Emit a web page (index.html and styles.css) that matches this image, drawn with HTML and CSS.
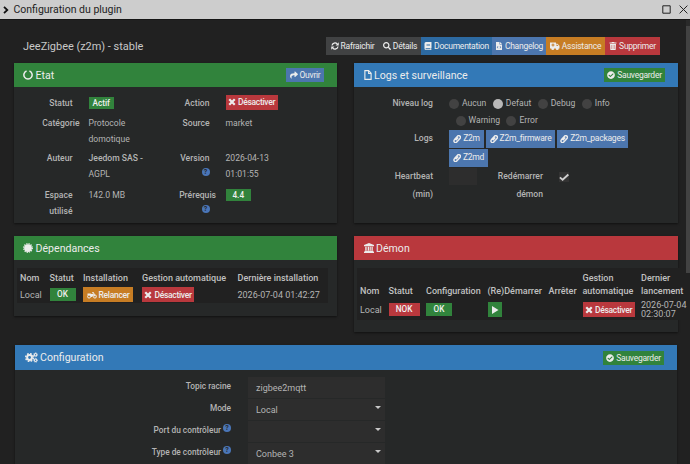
FILE: index.html
```
<!DOCTYPE html>
<html lang="fr">
<head>
    <meta charset="UTF-8">
    <meta name="viewport" content="width=device-width, initial-scale=1.0">
    <title>Configuration du plugin</title>
    <link rel="stylesheet" href="styles.css">
</head>
<body>
    <svg class="sprite" aria-hidden="true">
        <symbol id="i-check" viewBox="0 0 512 512"><path d="M504 256c0 136.967-111.033 248-248 248S8 392.967 8 256 119.033 8 256 8s248 111.033 248 248zM227.314 387.314l184-184c6.248-6.248 6.248-16.379 0-22.627l-22.627-22.627c-6.248-6.249-16.379-6.249-22.628 0L216 308.118l-70.059-70.059c-6.248-6.248-16.379-6.248-22.628 0l-22.627 22.627c-6.248 6.248-6.248 16.379 0 22.627l104 104c6.249 6.249 16.379 6.249 22.628.001z"/></symbol>
        <symbol id="i-search" viewBox="0 0 512 512"><path d="M505 442.7L405.3 343c-4.5-4.5-10.6-7-17-7H372c27.6-35.3 44-79.7 44-128C416 93.1 322.9 0 208 0S0 93.1 0 208s93.1 208 208 208c48.3 0 92.7-16.4 128-44v16.3c0 6.4 2.5 12.5 7 17l99.7 99.7c9.4 9.4 24.6 9.4 33.9 0l28.3-28.3c9.4-9.4 9.4-24.6.1-34zM208 336c-70.7 0-128-57.2-128-128 0-70.7 57.2-128 128-128 70.7 0 128 57.2 128 128 0 70.7-57.2 128-128 128z"/></symbol>
        <symbol id="i-share" viewBox="0 0 512 512"><path d="M503.691 189.836L327.687 37.851C312.281 24.546 288 35.347 288 56.015v80.053C127.371 137.907 0 170.1 0 322.326c0 61.441 39.581 122.309 83.333 154.132 13.653 9.931 33.111-2.533 28.077-18.631C66.066 312.814 132.917 274.316 288 272.085V360c0 20.7 24.3 31.453 39.687 18.164l176.004-152c11.071-9.562 11.086-26.753 0-36.328z"/></symbol>
        <symbol id="i-sync" viewBox="0 0 16 16"><path d="M2 7a6 6 0 0 1 10.5-3M14 9a6 6 0 0 1-10.5 3" fill="none" stroke="currentColor" stroke-width="2.4"/><path d="M15.5.5v6.3H9.2zM.5 15.5V9.2h6.3z"/></symbol>
        <symbol id="i-book" viewBox="0 0 16 16"><path fill-rule="evenodd" d="M4 0h11v12l-.6.6v2.2H15V16H4a3 3 0 0 1-3-3V3a3 3 0 0 1 3-3zm1 4v1.2h7V4zm0 2.4v1.2h7V6.4zM4 12.3a1 1 0 0 0 0 2h8.8v-2z"/></symbol>
        <symbol id="i-file-code" viewBox="0 0 16 16"><path fill-rule="evenodd" d="M2 0h7v5h5v11H2zM10 0l4 4h-4zM6 8l-2.5 2.5L6 13l.8-.8-1.7-1.7 1.7-1.7zm4 0-.8.8 1.7 1.7-1.7 1.7.8.8 2.5-2.5z"/></symbol>
        <symbol id="i-ambulance" viewBox="0 0 20 16"><path fill-rule="evenodd" d="M0 1h12v2.5h3l4 4V13h-1.5a3 3 0 0 1-6 0h-3a3 3 0 0 1-6 0H0zm5 2v2H3v2h2v2h2V7h2V5H7V3zm8 2v3h4l-3-3z"/><circle cx="5.5" cy="13" r="1.4"/><circle cx="14.5" cy="13" r="1.4"/></symbol>
        <symbol id="i-trash" viewBox="0 0 16 16"><path d="M1 1h4l1-1h4l1 1h4v2H1z"/><path fill-rule="evenodd" d="M2 4h12l-.7 12H2.7zM5 6v8h.7V6zm2.7 0v8h.7V6zM10.3 6v8h.7V6z"/></symbol>
        <symbol id="i-times" viewBox="0 0 16 16"><path d="M2.5 2.5l11 11m0-11l-11 11" fill="none" stroke="currentColor" stroke-width="4.4"/></symbol>
        <symbol id="i-ring" viewBox="0 0 16 16"><path d="M10.3 1.7a6.6 6.6 0 1 1-4.6 0" fill="none" stroke="currentColor" stroke-width="2.4"/></symbol>
        <symbol id="i-file" viewBox="0 0 12 16"><path d="M1 1h6l4 4v10H1zM7 1v4.5h4" fill="none" stroke="currentColor" stroke-width="1.8"/></symbol>
        <symbol id="i-clip" viewBox="0 0 16 16"><path d="M5.5 10.5l5-5.5M3.5 8.5l5.5-6a3.3 3.3 0 0 1 5 4.5L7.5 14a3 3 0 0 1-5-4z" fill="none" stroke="currentColor" stroke-width="2.9"/></symbol>
        <symbol id="i-badge" viewBox="0 0 16 16"><circle cx="8" cy="8" r="6.2"/><circle cx="8" cy="8" r="6.8" fill="none" stroke="currentColor" stroke-width="2.2" stroke-dasharray="1.9 1.66"/></symbol>
        <symbol id="i-bank" viewBox="0 0 16 16"><path d="M8 0l8 3.3V5H0V3.300zM2 6h2.200v6H2zm3.900 0H8v6H5.900zm3.100 0h1.800v6H9zm3 0h2v6h-2zM1 12.500h14V14h1v2H0v-2h1z"/></symbol>
        <symbol id="i-moto" viewBox="0 0 20 16"><g fill="none" stroke="currentColor" stroke-width="2"><circle cx="4.2" cy="11" r="3.1"/><circle cx="15.8" cy="11" r="3.1"/><path d="M10.5 3H13l3 8"/></g><path d="M1 5h6l2 1 5-1-1 4-3 3H8L5 8H1z"/></symbol>
        <symbol id="i-play" viewBox="0 0 16 16"><path d="M2 0l13 8-13 8z"/></symbol>
        <symbol id="i-cogs" viewBox="0 0 20 16"><circle cx="7" cy="8" r="3.7" fill="none" stroke="currentColor" stroke-width="3"/><circle cx="7" cy="8" r="5.9" fill="none" stroke="currentColor" stroke-width="2.4" stroke-dasharray="2.63 2"/><g fill="none" stroke="currentColor"><circle cx="16.3" cy="3.7" r="1.9" stroke-width="1.7"/><circle cx="16.3" cy="3.7" r="3" stroke-width="1.2" stroke-dasharray="1.35 1"/><circle cx="16.3" cy="12.3" r="1.9" stroke-width="1.7"/><circle cx="16.3" cy="12.3" r="3" stroke-width="1.2" stroke-dasharray="1.35 1"/></g></symbol>
        <symbol id="i-tick" viewBox="0 0 16 16"><path d="M1.5 8.5l4.3 4L15 4" fill="none" stroke="currentColor" stroke-width="3"/></symbol>
    </svg>

    <header class="titlebar">
        <svg class="chevron" viewBox="0 0 6 8"><path d="M1 .8l3.3 3.2L1 7.2"/></svg>
        <span class="title">Configuration du plugin</span>
        <svg class="win" viewBox="0 0 9 9"><path d="M.8.8h7.4v7.4H.8z"/></svg>
        <svg class="win" viewBox="0 0 9 9"><path d="M.6.6l7.8 7.8m0-7.8L.6 8.4"/></svg>
    </header>
    <div class="scrollbar"></div>

    <main class="page">
        <div class="plugin-head">
            <h1>JeeZigbee (z2m) - stable</h1>
            <div class="toolbar">
                <a class="btn gray w-refresh"><svg><use href="#i-sync"/></svg>Rafraichir</a>
                <a class="btn gray w-details"><svg><use href="#i-search"/></svg>Détails</a>
                <a class="btn primary w-doc"><svg><use href="#i-book"/></svg>Documentation</a>
                <a class="btn info w-log"><svg><use href="#i-file-code"/></svg>Changelog</a>
                <a class="btn warning w-help"><svg class="wide"><use href="#i-ambulance"/></svg>Assistance</a>
                <a class="btn danger w-del"><svg><use href="#i-trash"/></svg>Supprimer</a>
            </div>
        </div>

        <div class="panels">
            <section class="panel state">
                <h2 class="success"><svg><use href="#i-ring"/></svg>Etat <a class="btn info w-open"><svg><use href="#i-share"/></svg>Ouvrir</a></h2>
                <div class="state-grid">
                    <label>Statut</label>
                    <div><span class="tag success w-tag">Actif</span></div>
                    <label>Action</label>
                    <div><a class="btn danger w-off"><svg><use href="#i-times"/></svg>Désactiver</a></div>

                    <label class="over">Catégorie</label>
                    <div>Protocole domotique</div>
                    <label>Source</label>
                    <div>market</div>

                    <label>Auteur</label>
                    <div><b>Jeedom SAS -</b><br>AGPL</div>
                    <label>Version<br><i class="help">?</i></label>
                    <div>2026-04-13 01:01:55</div>

                    <label>Espace<br>utilisé</label>
                    <div>142.0 MB</div>
                    <label><span class="over">Prérequis</span><br><i class="help">?</i></label>
                    <div><span class="tag success w-tag">4.4</span></div>
                </div>
            </section>

            <section class="panel logs">
                <h2 class="primary"><svg class="narrow"><use href="#i-file"/></svg>Logs et surveillance <a class="btn success w-save"><svg><use href="#i-check"/></svg>Sauvegarder</a></h2>
                <div class="logs-grid">
                    <label>Niveau log</label>
                    <div class="levels">
                        <div class="level-row">
                            <span class="radio">Aucun</span>
                            <span class="radio checked">Defaut</span>
                            <span class="radio">Debug</span>
                            <span class="radio">Info</span>
                        </div>
                        <div class="level-row second">
                            <span class="radio">Warning</span>
                            <span class="radio">Error</span>
                        </div>
                    </div>
                    <label>Logs</label>
                    <div class="files">
                        <a class="btn info w-z2m"><svg><use href="#i-clip"/></svg>Z2m</a>
                        <a class="btn info w-firmware"><svg><use href="#i-clip"/></svg>Z2m_firmware</a>
                        <a class="btn info w-packages"><svg><use href="#i-clip"/></svg>Z2m_packages</a>
                        <a class="btn info w-z2md"><svg><use href="#i-clip"/></svg>Z2md</a>
                    </div>
                    <label>Heartbeat<br>(min)</label>
                    <div class="heartbeat">
                        <span class="small-input"></span>
                        <label>Redémarrer démon</label>
                        <span class="checkbox"><svg><use href="#i-tick"/></svg></span>
                    </div>
                </div>
            </section>

            <section class="panel deps">
                <h2 class="success"><svg><use href="#i-badge"/></svg>Dépendances</h2>
                <table>
                    <colgroup><col class="d1"><col class="d2"><col class="d3"><col class="d4"><col class="d5"></colgroup>
                    <tr>
                        <th>Nom</th>
                        <th>Statut</th>
                        <th>Installation</th>
                        <th>Gestion automatique</th>
                        <th>Dernière installation</th>
                    </tr>
                    <tr>
                        <td>Local</td>
                        <td><span class="tag success w-ok">OK</span></td>
                        <td><a class="btn warning w-relaunch"><svg class="wide"><use href="#i-moto"/></svg>Relancer</a></td>
                        <td><a class="btn danger w-off"><svg><use href="#i-times"/></svg>Désactiver</a></td>
                        <td>2026-07-04 01:42:27</td>
                    </tr>
                </table>
            </section>

            <section class="panel daemon">
                <h2 class="danger"><svg><use href="#i-bank"/></svg>Démon</h2>
                <table>
                    <colgroup><col class="m1"><col class="m2"><col class="m3"><col class="m4"><col class="m5"><col class="m6"><col class="m7"></colgroup>
                    <tr>
                        <th>Nom</th>
                        <th>Statut</th>
                        <th>Configuration</th>
                        <th>(Re)Démarrer</th>
                        <th>Arrêter</th>
                        <th>Gestion<br>automatique</th>
                        <th>Dernier<br>lancement</th>
                    </tr>
                    <tr>
                        <td>Local</td>
                        <td><span class="tag danger w-nok">NOK</span></td>
                        <td><span class="tag success w-ok">OK</span></td>
                        <td><a class="btn success w-play"><svg><use href="#i-play"/></svg></a></td>
                        <td></td>
                        <td><a class="btn danger w-off"><svg><use href="#i-times"/></svg>Désactiver</a></td>
                        <td class="date">2026-07-04<br>02:30:07</td>
                    </tr>
                </table>
            </section>
        </div>

        <section class="panel config">
            <h2 class="primary"><svg class="wide"><use href="#i-cogs"/></svg>Configuration <a class="btn success w-save"><svg><use href="#i-check"/></svg>Sauvegarder</a></h2>
            <div class="config-grid">
                <label>Topic racine</label>
                <div class="field">zigbee2mqtt</div>
                <label>Mode</label>
                <div class="field select">Local</div>
                <label>Port du contrôleur <i class="help">?</i></label>
                <div class="field select"></div>
                <label>Type de contrôleur <i class="help">?</i></label>
                <div class="field select">Conbee 3</div>
            </div>
        </section>
    </main>
</body>
</html>
```
FILE: styles.css
```
* {
    box-sizing: border-box;
}

body {
    margin: 0;
    height: 464px;
    overflow: hidden;
    background-color: #212121;
    color: #b4b4b4;
    font-family: Roboto, "Liberation Sans", sans-serif;
    font-size: 8.6px;
}

.sprite {
    display: none;
}

.titlebar {
    display: flex;
    align-items: center;
    height: 20px;
    padding: 0 2px 0 3px;
    background-color: #cdcdcd;
    border-bottom: 1px solid #151515;
    color: #1d1d1d;
}

.titlebar svg {
    fill: none;
    stroke: #222;
}

.titlebar .chevron {
    width: 6px;
    height: 8px;
    margin-right: 4.5px;
    stroke: #111;
    stroke-width: 1.8;
}

.title {
    flex: 1;
    font-size: 10.5px;
}

.win {
    width: 9px;
    height: 9px;
    margin-left: 8px;
}

.scrollbar {
    position: absolute;
    top: 20px;
    right: 0;
    width: 4px;
    height: 253px;
    background-color: #424242;
    border-top: 6px solid #2a2a2a;
}

.page {
    padding: 17px 12px 0 13.5px;
}

.plugin-head {
    display: flex;
    justify-content: space-between;
    height: 26px;
    padding: 0 18px 0 9.5px;
}

h1 {
    margin: 3px 0 0;
    font-size: 10.95px;
    line-height: 14px;
    font-weight: 400;
    color: #c8c8c8;
}

.toolbar {
    display: flex;
    height: 17.5px;
}

.btn {
    display: inline-flex;
    align-items: center;
    justify-content: center;
    gap: 2px;
    height: 14.5px;
    font-size: 8.5px;
    font-weight: 400;
    letter-spacing: -0.25px;
    color: #ececec;
    white-space: nowrap;
}

.btn svg {
    width: 8px;
    height: 8px;
    flex: none;
    fill: currentColor;
}

.btn svg.wide {
    width: 10px;
}

.toolbar .btn {
    height: 100%;
}

.gray { background-color: #414243; }
.primary { background-color: #3379b7; }
.info { background-color: #4c76ae; }
.success { background-color: #31833c; }
.warning { background-color: #c77d24; }
.danger { background-color: #b9383d; }

.toolbar .primary { background-color: #2d6aa2; }

.w-refresh { width: 53px; }
.w-details { width: 42px; }
.w-doc { width: 71px; }
.w-log { width: 54px; }
.w-help { width: 59px; }
.w-del { width: 55px; }
.w-open { width: 38px; }
.w-save { width: 61px; }
.w-off { width: 52px; }
.w-relaunch { width: 50px; }
.w-play { width: 14px; }
.w-z2m { width: 35px; }
.w-firmware { width: 69px; }
.w-packages { width: 71px; }
.w-z2md { width: 39px; }

.panels {
    display: grid;
    grid-template-columns: 323.5px 324px;
    grid-template-rows: 160px 96px;
    column-gap: 17px;
    row-gap: 13px;
    align-items: start;
}

.panel {
    background-color: #262828;
    box-shadow: 0 1px 2px rgba(0, 0, 0, 0.5);
}

.state,
.logs {
    height: 160px;
}

.deps {
    height: 80px;
}

.daemon {
    height: 96px;
}

h2 {
    display: flex;
    align-items: center;
    height: 24px;
    margin: 0;
    padding: 0 13px 0 9.5px;
    font-size: 10.6px;
    font-weight: 400;
    color: #ececec;
}

h2 > svg {
    width: 10px;
    height: 10px;
    margin-right: 2.5px;
    fill: currentColor;
}

h2 > svg.narrow {
    width: 8px;
}

h2 > svg.wide {
    width: 13px;
    height: 11px;
}

h2 .btn {
    height: 14px;
    margin-left: auto;
}

label,
th,
b {
    font-weight: 500;
}

b {
    white-space: nowrap;
}

.state-grid {
    display: grid;
    grid-template-columns: 59px 54px 51px 50px;
    grid-template-rows: 19.5px 35px 37px 34px;
    column-gap: 16px;
    padding-top: 8px;
    line-height: 16.5px;
}

.state-grid label,
.logs-grid label,
.config-grid label {
    text-align: right;
}

.state-grid label.over {
    margin-right: -7px;
}

span.over {
    margin-right: -6.5px;
}

.tag {
    display: inline-block;
    height: 12px;
    line-height: 12px;
    font-size: 8.2px;
    font-weight: 500;
    color: #f0f0f0;
    text-align: center;
}

.w-tag {
    width: 25.5px;
}

.help {
    display: inline-block;
    width: 8px;
    height: 8px;
    border-radius: 50%;
    background-color: #4a76b8;
    color: #262828;
    font-size: 7px;
    line-height: 8px;
    font-weight: 700;
    font-style: normal;
    text-align: center;
    vertical-align: 3px;
}

.logs-grid {
    display: grid;
    grid-template-columns: 79px 200px;
    grid-template-rows: 34.5px 38.5px 37px;
    column-gap: 16px;
    padding-top: 8px;
    line-height: 17.5px;
}

.level-row {
    display: flex;
    height: 17px;
    gap: 6.5px;
}

.level-row.second {
    padding-left: 6.5px;
}

.radio {
    display: flex;
    align-items: center;
    gap: 3px;
}

.radio::before {
    content: "";
    width: 10px;
    height: 10px;
    border-radius: 50%;
    background-color: #424242;
}

.radio.checked::before {
    background-color: #b8b8b8;
}

.files {
    display: flex;
    flex-wrap: wrap;
    align-content: flex-start;
    gap: 1px 2px;
}

.files .btn {
    height: 18px;
}

.heartbeat {
    display: flex;
}

.small-input {
    width: 28px;
    height: 17px;
    background-color: #2d2d2d;
}

.heartbeat label {
    width: 66px;
}

.checkbox {
    width: 10px;
    height: 10px;
    margin: 4px 0 0 16px;
    background-color: #333;
    line-height: 0;
}

.checkbox svg {
    width: 10px;
    height: 10px;
    color: #d0d0d0;
}

table {
    table-layout: fixed;
    border-collapse: collapse;
    background-color: #212121;
    font-size: 9px;
    white-space: nowrap;
}

th,
td {
    padding: 0 0 0 3px;
    text-align: left;
    vertical-align: middle;
}

th {
    color: #c0c0c0;
    vertical-align: bottom;
}

td .btn,
td .tag {
    vertical-align: middle;
}

td .btn,
.state-grid .btn {
    font-weight: 500;
    letter-spacing: -0.3px;
}

.deps table {
    width: 311px;
    margin: 8px 0 0 3.5px;
}

.deps th {
    height: 18px;
    line-height: 15px;
}

.deps td {
    height: 17px;
}

.w-ok {
    width: 26px;
    height: 13px;
    line-height: 13px;
}

.w-nok {
    width: 31px;
    height: 13px;
    line-height: 13px;
}

.d1 { width: 29.5px; }
.d2 { width: 33.5px; }
.d3 { width: 59px; }
.d4 { width: 95.5px; }
.d5 { width: 93.5px; }

.daemon table {
    width: 329px;
    margin: 8px 0 0 3px;
}

.daemon th {
    height: 31px;
    padding-bottom: 1px;
    line-height: 13px;
}

.daemon td {
    height: 21px;
}

.daemon .date {
    line-height: 9px;
}

.m1 { width: 28.5px; }
.m2 { width: 37.5px; }
.m3 { width: 61.5px; }
.m4 { width: 61px; }
.m5 { width: 34px; }
.m6 { width: 58.5px; }
.m7 { width: 48px; }

.config {
    width: 662px;
    height: 119px;
    margin: 13px 0 0 1.5px;
}

.config h2 {
    height: 25px;
}

.config-grid {
    display: grid;
    grid-template-columns: 216px 137px;
    grid-auto-rows: 21px;
    column-gap: 17px;
    row-gap: 1px;
    padding-top: 7px;
}

.config-grid label {
    font-size: 8.3px;
    line-height: 18px;
}

.field {
    display: flex;
    align-items: center;
    justify-content: space-between;
    padding: 0 4px 0 8px;
    background-color: #2d2d2d;
    font-size: 9px;
}

.select::after {
    content: "";
    margin-left: auto;
    margin-bottom: 4px;
    border: 3.5px solid transparent;
    border-top-color: #c8c8c8;
    border-bottom: 0;
}
```
